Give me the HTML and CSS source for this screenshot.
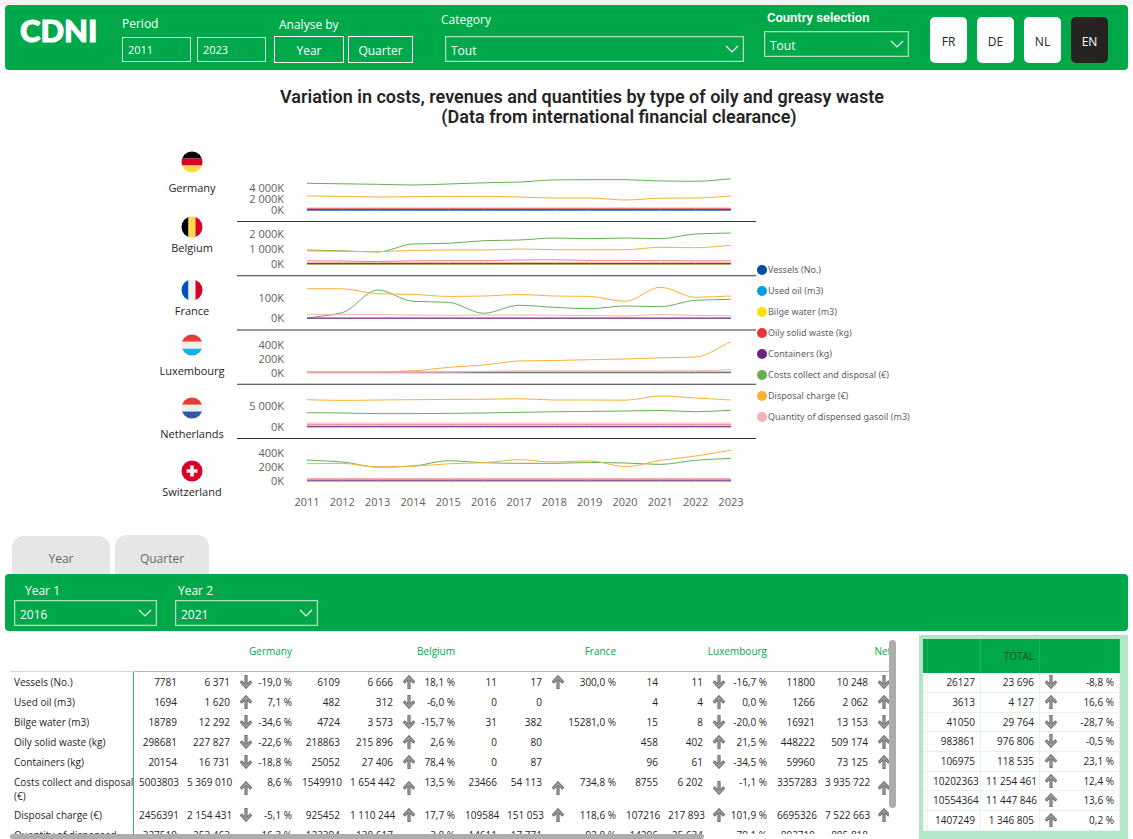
FILE: index.html
```html
<!DOCTYPE html>
<html lang="en">
<head>
    <meta charset="UTF-8">
    <meta name="viewport" content="width=device-width, initial-scale=1.0">
    <title>CDNI - Financial clearance</title>
    <link rel="stylesheet" href="styles.css">
</head>
<body>
    <svg class="defs" aria-hidden="true">
        <symbol id="arrow" viewBox="0 0 12 14">
            <path d="M6 12.5V3M1.8 6.6L6 2.2l4.2 4.4" fill="none" stroke="#6b6b6b" stroke-width="3.2" stroke-linecap="square"/>
            <path d="M6 12.5V3M1.8 6.6L6 2.2l4.2 4.4" fill="none" stroke="#9c9c9c" stroke-width="1.4" stroke-linecap="square"/>
        </symbol>
        <symbol id="chevron" viewBox="0 0 14 8">
            <path d="M1 1l6 6 6-6" fill="none" stroke="#fff" stroke-width="1.2"/>
        </symbol>
        <clipPath id="round"><circle cx="11" cy="11" r="10.5"/></clipPath>
    </svg>

    <header class="topbar">
        <div class="logo">CDNI</div>

        <div class="field period">
            <label for="from">Period</label>
            <div class="pair">
                <input type="text" id="from" value="2011">
                <input type="text" id="to" value="2023" aria-label="Period end">
            </div>
        </div>

        <div class="field analyse">
            <span class="caption">Analyse by</span>
            <div class="pair">
                <button type="button" class="outline wide">Year</button>
                <button type="button" class="outline">Quarter</button>
            </div>
        </div>

        <div class="field category">
            <label for="category">Category</label>
            <div class="select">
                <select id="category"><option>Tout</option></select>
                <svg><use href="#chevron"/></svg>
            </div>
        </div>

        <div class="field country-select">
            <label for="country">Country selection</label>
            <div class="select">
                <select id="country"><option>Tout</option></select>
                <svg><use href="#chevron"/></svg>
            </div>
        </div>

        <div class="langs">
            <button type="button">FR</button>
            <button type="button">DE</button>
            <button type="button">NL</button>
            <button type="button" class="active">EN</button>
        </div>
    </header>

    <main>
        <h1>Variation in costs, revenues and quantities by type of oily and greasy waste
            <span>(Data from international financial clearance)</span></h1>

        <section class="overview">
            <ul class="countries">
                <li class="loose">
                    <svg viewBox="0 0 22 22"><g clip-path="url(#round)"><path fill="#000" d="M0 0h22v7.5H0z"/><path fill="#d80027" d="M0 7.5h22v7H0z"/><path fill="#ffda44" d="M0 14.5h22V22H0z"/></g></svg>
                    Germany
                </li>
                <li>
                    <svg viewBox="0 0 22 22"><g clip-path="url(#round)"><path fill="#000" d="M0 0h7.5v22H0z"/><path fill="#ffda44" d="M7.5 0h7v22h-7z"/><path fill="#d80027" d="M14.5 0H22v22h-7.5z"/></g></svg>
                    Belgium
                </li>
                <li>
                    <svg viewBox="0 0 22 22"><g clip-path="url(#round)"><path fill="#0052b4" d="M0 0h7.5v22H0z"/><path fill="#f0f0f0" d="M7.5 0h7v22h-7z"/><path fill="#d80027" d="M14.5 0H22v22h-7.5z"/></g></svg>
                    France
                </li>
                <li class="loose">
                    <svg viewBox="0 0 22 22"><g clip-path="url(#round)"><path fill="#e73b36" d="M0 0h22v7.8H0z"/><path fill="#efefef" d="M0 7.8h22v7H0z"/><path fill="#18aee5" d="M0 14.8h22V22H0z"/></g></svg>
                    Luxembourg
                </li>
                <li class="loose">
                    <svg viewBox="0 0 22 22"><g clip-path="url(#round)"><path fill="#e73b36" d="M0 0h22v7.8H0z"/><path fill="#efefef" d="M0 7.8h22v6.6H0z"/><path fill="#3555a5" d="M0 14.4h22V22H0z"/></g></svg>
                    Netherlands
                </li>
                <li>
                    <svg viewBox="0 0 22 22"><circle cx="11" cy="11" r="10.5" fill="#d80027"/><path fill="#f0f0f0" d="M9.2 5.5h3.6v3.7h3.7v3.6h-3.7v3.7H9.2v-3.7H5.5V9.2h3.7z"/></svg>
                    Switzerland
                </li>
            </ul>

            <svg class="chart" id="chart" viewBox="237 140 520 375" role="img" aria-label="Costs, revenues and quantities per country, 2011 to 2023"></svg>

            <ul class="legend">
                <li class="vessels">Vessels (No.)</li>
                <li class="oil">Used oil (m3)</li>
                <li class="bilge">Bilge water (m3)</li>
                <li class="solid">Oily solid waste (kg)</li>
                <li class="containers">Containers (kg)</li>
                <li class="costs">Costs collect and disposal (€)</li>
                <li class="charge">Disposal charge (€)</li>
                <li class="gasoil">Quantity of dispensed gasoil (m3)</li>
            </ul>
        </section>

        <nav class="tabs">
            <button type="button">Year</button>
            <button type="button" class="tall">Quarter</button>
        </nav>

        <section class="yearbar">
            <div class="field">
                <label for="year1">Year 1</label>
                <div class="select">
                    <select id="year1"><option>2016</option></select>
                    <svg><use href="#chevron"/></svg>
                </div>
            </div>
            <div class="field year2">
                <label for="year2">Year 2</label>
                <div class="select">
                    <select id="year2"><option>2021</option></select>
                    <svg><use href="#chevron"/></svg>
                </div>
            </div>
        </section>

        <section class="results">
            <div class="matrix">
                <div class="matrix-view">
                    <table>
                        <colgroup>
                            <col class="c-label">
                            <col class="c-num"><col class="c-numw"><col class="c-pct">
                            <col class="c-num"><col class="c-numw"><col class="c-pct">
                            <col class="c-nums"><col class="c-numm"><col class="c-pctw">
                            <col class="c-nums"><col class="c-numm"><col class="c-pctm">
                            <col class="c-num"><col class="c-numw"><col class="c-pctm">
                        </colgroup>
                        <thead>
                            <tr>
                                <th></th>
                                <th colspan="3">Germany</th>
                                <th colspan="3">Belgium</th>
                                <th colspan="3">France</th>
                                <th colspan="3">Luxembourg</th>
                                <th colspan="3">Netherlands</th>
                            </tr>
                        </thead>
                        <tbody id="countryRows"></tbody>
                    </table>
                </div>
                <div class="track-y"><div class="thumb"></div></div>
                <div class="track-x"><div class="thumb"></div></div>
            </div>

            <div class="total">
                <table>
                    <colgroup><col class="t-edge"><col class="t-a"><col class="t-b"><col></colgroup>
                    <thead>
                        <tr><th></th><th></th><th>TOTAL</th><th></th></tr>
                    </thead>
                    <tbody id="totalRows"></tbody>
                </table>
            </div>
        </section>
    </main>

    <script src="script.js"></script>
</body>
</html>
```

FILE: styles.css
```css
* {
    box-sizing: border-box;
}
body {
    margin: 0;
    padding: 0 5px;
    border-top: 5px solid #f3f3f3;
    height: 100vh;
    overflow: hidden;
    display: flex;
    flex-direction: column;
    font-family: "Open Sans", "Noto Sans", sans-serif;
    font-size: 12px;
    color: #252423;
    background-color: #fff;
}
button, input, select {
    font: inherit;
    color: inherit;
    margin: 0;
}
ul {
    list-style: none;
    margin: 0;
    padding: 0;
}
.defs {
    position: absolute;
    width: 0;
    height: 0;
}

/* top bar */
.topbar {
    display: flex;
    align-items: flex-start;
    height: 65px;
    flex-shrink: 0;
    padding-right: 20px;
    border-radius: 4px;
    background-color: #00a84a;
    color: #fff;
}
.logo {
    width: 117px;
    padding: 8px 0 0 15px;
    font-family: Lato, sans-serif;
    font-weight: 900;
    font-size: 31px;
    line-height: 34px;
    -webkit-text-stroke: 1px #fff;
}
.field label, .caption {
    display: block;
    line-height: 16px;
}
.pair {
    display: flex;
}
.period {
    padding-top: 11px;
    margin-right: 8px;
}
.period .pair {
    gap: 6px;
    margin-top: 5px;
}
.period input {
    width: 69px;
    height: 25px;
    padding: 0 5px;
    border: 1px solid #c4ecd3;
    background: transparent;
    font-size: 11px;
}
.analyse {
    padding-top: 12px;
    margin-right: 28px;
}
.caption {
    padding-left: 5px;
}
.analyse .pair {
    gap: 4px;
    margin-top: 3px;
}
.outline {
    width: 65px;
    height: 27px;
    padding: 2px 0 0;
    border: 1px solid #fff;
    background: transparent;
}
.outline.wide {
    width: 70px;
}
.category {
    flex: 1;
    padding-top: 7px;
    margin-right: 20px;
}
.category .select {
    margin: 8px 0 0 4px;
}
.country-select {
    width: 145px;
    padding-top: 5px;
    margin-right: 21px;
}
.country-select label {
    padding-left: 3px;
    font-family: Roboto, sans-serif;
    font-weight: 600;
    font-size: 13px;
}
.country-select .select {
    margin-top: 5px;
}
.select {
    position: relative;
}
.select select {
    appearance: none;
    display: block;
    width: 100%;
    height: 26px;
    padding: 2px 5px 0;
    border: 1px solid #a8dfbc;
    border-radius: 0;
    box-shadow: inset 0 0 0 1px rgba(160, 205, 175, 0.35);
    background: transparent;
}
.select svg {
    position: absolute;
    right: 5px;
    top: 9px;
    width: 14px;
    height: 8px;
    pointer-events: none;
}
.langs {
    display: flex;
    gap: 10px;
    padding-top: 12px;
}
.langs button {
    width: 37px;
    height: 46px;
    padding: 2px 0 0;
    border: 0;
    border-radius: 5px;
    background-color: #fff;
    color: #252423;
    font-size: 12px;
}
.langs button.active {
    background-color: #252423;
    color: #fff;
}

/* chart */
main {
    flex: 1;
    min-height: 0;
    display: flex;
    flex-direction: column;
}
h1 {
    margin: 17px 0 13px;
    padding-left: 31px;
    text-align: center;
    font-family: Roboto, sans-serif;
    font-weight: 600;
    font-size: 18px;
    line-height: 20px;
}
h1 span {
    display: block;
    padding-left: 74px;
}
.overview {
    display: flex;
    padding-left: 152px;
}
.countries {
    display: grid;
    grid-template-rows: 65px 63px 55px 63px 63px 40px;
    width: 70px;
    margin-right: 10px;
    padding-top: 11px;
}
.countries li {
    display: flex;
    flex-direction: column;
    align-items: center;
    gap: 2px;
    line-height: 16px;
    font-size: 11px;
}
.countries .loose {
    gap: 7px;
}
.countries svg {
    width: 22px;
    height: 22px;
}
.chart {
    flex: 0 1 520px;
    min-width: 0;
    height: 375px;
    font-size: 11px;
}
.chart text {
    fill: #605e5c;
    text-anchor: end;
}
.chart .year {
    text-anchor: middle;
}
.chart .divider {
    stroke: #333;
}
.chart path {
    fill: none;
    stroke-width: 1;
}
.chart .vessels, .chart .bilge, .chart .solid {
    stroke-opacity: 0.6;
}
.legend {
    padding-top: 119px;
    font-family: "Noto Sans", sans-serif;
    font-size: 9px;
    line-height: 21px;
    color: #605e5c;
}
.legend li {
    display: flex;
    align-items: center;
    gap: 1px;
    height: 21px;
    white-space: nowrap;
}
.legend li::before {
    content: "";
    width: 10px;
    height: 10px;
    border-radius: 50%;
    background-color: currentColor;
}
.legend .vessels::before { background-color: #0050a0; }
.legend .oil::before { background-color: #009fe3; }
.legend .bilge::before { background-color: #ffde00; }
.legend .solid::before { background-color: #e73440; }
.legend .containers::before { background-color: #662483; }
.legend .costs::before { background-color: #65b054; }
.legend .charge::before { background-color: #f9b233; }
.legend .gasoil::before { background-color: #f7afb6; }

/* year selection */
.tabs {
    display: flex;
    align-items: flex-end;
    gap: 5px;
    margin-top: 20px;
    padding-left: 7px;
}
.tabs button {
    width: 98px;
    height: 38px;
    padding: 7px 0 0;
    border: 0;
    border-radius: 12px 12px 0 0;
    background-color: #e6e6e6;
    color: #666;
}
.tabs .tall {
    width: 94px;
    height: 39px;
}
.yearbar {
    display: flex;
    gap: 18px;
    height: 57px;
    flex-shrink: 0;
    padding: 9px 9px 0;
    border-radius: 4px;
    background-color: #00a84a;
    color: #fff;
}
.yearbar .field {
    width: 143px;
}
.yearbar label {
    padding-left: 11px;
}
.yearbar .year2 label {
    padding-left: 3px;
}
.yearbar .select {
    margin-top: 1px;
}

/* tables */
.results {
    flex: 1;
    min-height: 0;
    display: flex;
    justify-content: space-between;
    gap: 23px;
    padding: 4px 0 0 5px;
    font-size: 10px;
}
table {
    border-collapse: separate;
    border-spacing: 0;
    table-layout: fixed;
}
th, td {
    font-weight: 400;
    text-align: right;
    padding: 0 5px;
    white-space: nowrap;
}
.matrix {
    flex: 1;
    min-width: 0;
    display: grid;
    grid-template-columns: minmax(0, 1fr) 7px;
    grid-template-rows: minmax(0, 1fr) 5px;
    padding-top: 5px;
}
.matrix-view {
    overflow: hidden;
}
.matrix table {
    width: 927px;
}
.matrix thead th {
    height: 32px;
    padding-bottom: 10px;
    border-bottom: 1px solid #86d6a4;
    color: #00a84a;
}
.matrix thead th:first-child {
    border-bottom-color: #b9e8cb;
}
.matrix td {
    height: 20px;
    line-height: 20px;
    vertical-align: top;
}
.matrix tbody th {
    height: 20px;
    padding: 3px 0 2px 4px;
    line-height: 14px;
    text-align: left;
    vertical-align: top;
    border-right: 1px solid #35b566;
}
.c-label { width: 124px; }
.c-num { width: 48px; }
.c-numw { width: 53px; }
.c-nums { width: 42px; }
.c-numm { width: 45px; }
.c-pct { width: 62px; }
.c-pctm { width: 64px; }
.c-pctw { width: 74px; }
.pct {
    display: flex;
    justify-content: space-between;
    align-items: flex-start;
}
.pct svg {
    width: 12px;
    height: 14px;
    margin-top: 3px;
}
.pct .down {
    transform: rotate(180deg);
}
.pct span {
    margin-left: auto;
}
.double .pct svg {
    margin-top: 9px;
}
.thumb {
    border-radius: 4px;
    background-color: #adadad;
}
.track-y .thumb {
    height: 168px;
}
.track-x .thumb {
    width: 79%;
    height: 5px;
}
.total {
    width: 209px;
    padding: 4px 8px 10px 4px;
    background-color: #b3e5c7;
}
.total table {
    width: 100%;
    background-color: #fff;
}
.total thead th {
    height: 34px;
    border-right: 1px solid #1db45f;
    background-color: #00a84a;
    color: #14502d;
}
.total td {
    height: 20px;
    line-height: 19px;
    border-right: 1px solid #e6f5ec;
    border-bottom: 1px solid #e6f5ec;
}
.total tr:nth-child(3n) td {
    height: 19px;
    line-height: 18px;
}
.total .pct svg {
    margin-top: 2px;
}
.t-edge { width: 5px; }
.t-a { width: 53px; }
.t-b { width: 59px; }
.total th:first-child, .total td:first-child {
    padding: 0;
}
```

FILE: script.js
```javascript
const colors = {
    vessels: '#0050a0', bilge: '#ffde00', solid: '#e73440', containers: '#662483',
    costs: '#65b054', charge: '#f9b233', gasoil: '#f7afb6'
};

const flat = y => Array(13).fill(y);

// one panel per country, line positions from 2011 to 2023
const panels = [
    {
        ticks: [['4 000K', 188], ['2 000K', 199], ['0K', 210]],
        lines: {
            vessels: flat(210.5),
            gasoil: flat(207.9),
            solid: flat(208.5),
            containers: flat(209.6),
            costs: [183.3, 183.8, 184.3, 185, 184, 182.8, 182, 179.9, 179.7, 179.7, 181, 181.3, 178.8],
            charge: [196, 196.3, 197, 196.7, 196.3, 196.3, 197, 198, 198, 200, 198.2, 198, 196]
        }
    },
    {
        ticks: [['2 000K', 234], ['1 000K', 249], ['0K', 264]],
        lines: {
            vessels: flat(264.4),
            bilge: flat(264.4),
            containers: flat(263.6),
            costs: [250, 250.8, 252, 244, 243.3, 240.7, 240, 238, 238.7, 238, 238.7, 234, 233],
            charge: [251, 251.3, 251.7, 250.3, 250, 250, 249, 249.7, 249.7, 249.7, 247.3, 247.7, 245.3],
            gasoil: flat(262.4),
            solid: [260.8, 261, 261.6, 260.8, 260.7, 260.7, 259.9, 259.8, 260.4, 260.4, 260.7, 260.8, 260.8]
        }
    },
    {
        ticks: [['100K', 298], ['0K', 318]],
        lines: {
            solid: flat(318),
            costs: [318, 312.7, 290, 301.3, 302.3, 313.3, 305.3, 307.3, 308.7, 306, 306.7, 300.3, 299.3],
            charge: [288.7, 288.8, 293.7, 294.4, 296.4, 296, 294.5, 296, 296.4, 301.3, 287.3, 297.3, 296],
            gasoil: [314.3, 314.3, 314.6, 315, 315.3, 315, 315, 315.2, 315.5, 316, 314.5, 315.4, 315.8],
            containers: flat(318.2)
        }
    },
    {
        ticks: [['400K', 345], ['200K', 359], ['0K', 373]],
        lines: {
            containers: flat(372.7),
            costs: flat(372),
            charge: [371.7, 371.7, 371.7, 370.8, 367.4, 365, 361, 360.5, 359.7, 359, 357.8, 357, 341.7],
            gasoil: [372.4, 372.4, 372.4, 372.3, 372.2, 371.4, 370.9, 370.9, 370.9, 370.9, 370.9, 370.8, 369.6]
        }
    },
    {
        ticks: [['5 000K', 406], ['0K', 427]],
        lines: {
            vessels: flat(427),
            containers: flat(426.3),
            costs: [412.7, 413, 413.6, 413.6, 413.4, 413, 412.3, 411.8, 411.4, 411, 410.5, 411.7, 410.3],
            charge: [399.7, 400.4, 400, 399.7, 399.4, 399.3, 398.7, 400, 400, 400.2, 396, 398, 400],
            gasoil: flat(423.2),
            solid: flat(424.6)
        }
    },
    {
        ticks: [['400K', 453], ['200K', 467], ['0K', 481]],
        lines: {
            bilge: flat(481.2),
            containers: flat(480.8),
            costs: [460, 462, 467.2, 466, 460.7, 462.7, 463.3, 463.3, 462.5, 463, 464.4, 460.3, 458.3],
            charge: [463.7, 463.4, 467, 466.2, 463.8, 462.7, 459.7, 462, 460.8, 466.7, 460.4, 456, 450.3],
            gasoil: flat(478.4),
            solid: flat(479.4)
        }
    }
];

const startX = 307;
const stepX = 35.33;

// smooth line that does not overshoot its points
function curve(ys) {
    const d = ys.slice(1).map((y, i) => (y - ys[i]) / stepX);
    const m = ys.map((y, i) => {
        if (i === 0) return d[0];
        if (i === ys.length - 1) return d[i - 1];
        if (d[i - 1] * d[i] <= 0) return 0;
        return 2 * d[i - 1] * d[i] / (d[i - 1] + d[i]);
    });
    let path = `M${startX} ${ys[0]}`;
    for (let i = 1; i < ys.length; i++) {
        const x0 = startX + (i - 1) * stepX;
        const x1 = x0 + stepX;
        const h = stepX / 3;
        path += `C${x0 + h} ${ys[i - 1] + m[i - 1] * h} ${x1 - h} ${ys[i] - m[i] * h} ${x1} ${ys[i]}`;
    }
    return path;
}

let chart = '';
panels.forEach((panel, i) => {
    panel.ticks.forEach(([text, y]) => {
        chart += `<text x="284" y="${y + 4}">${text}</text>`;
    });
    for (const name in panel.lines) {
        chart += `<path class="${name}" d="${curve(panel.lines[name])}" stroke="${colors[name]}"/>`;
    }
    if (i > 0) {
        const y = 221.5 + (i - 1) * 54.25;
        chart += `<line class="divider" x1="237" x2="756" y1="${y}" y2="${y}"/>`;
    }
});
for (let i = 0; i < 13; i++) {
    chart += `<text class="year" x="${startX + i * stepX}" y="506">${2011 + i}</text>`;
}
document.getElementById('chart').innerHTML = chart;

// label, then year 1 | year 2 | u(p), d(own) or - | variation for each country
const countryRows = [
    ['Vessels (No.)', '7781|6 371|d|-19,0 %', '6109|6 666|u|18,1 %', '11|17|u|300,0 %', '14|11|d|-16,7 %', '11800|10 248|d|'],
    ['Used oil (m3)', '1694|1 620|u|7,1 %', '482|312|d|-6,0 %', '0|0|-|', '4|4|u|0,0 %', '1266|2 062|u|'],
    ['Bilge water (m3)', '18789|12 292|d|-34,6 %', '4724|3 573|d|-15,7 %', '31|382|-|15281,0 %', '15|8|d|-20,0 %', '16921|13 153|d|'],
    ['Oily solid waste (kg)', '298681|227 827|d|-22,6 %', '218863|215 896|u|2,6 %', '0|80|-|', '458|402|u|21,5 %', '448222|509 174|u|'],
    ['Containers (kg)', '20154|16 731|d|-18,8 %', '25052|27 406|u|78,4 %', '0|87|-|', '96|61|d|-34,5 %', '59960|73 125|u|'],
    ['Costs collect and disposal<br>(€)', '5003803|5 369 010|u|8,6 %', '1549910|1 654 442|u|13,5 %', '23466|54 113|u|734,8 %', '8755|6 202|d|-1,1 %', '3357283|3 935 722|u|'],
    ['Disposal charge (€)', '2456391|2 154 431|d|-5,1 %', '925452|1 110 244|u|17,7 %', '109584|151 053|u|118,6 %', '107216|217 893|u|101,9 %', '6695326|7 522 663|u|'],
    ['Quantity of dispensed<br>gasoil (m3)', '327519|253 463|d|-16,3 %', '123394|138 617|u|3,8 %', '14611|17 771|u|92,8 %', '14296|25 634|u|79,1 %', '892719|885 818|d|']
];

const totalRows = [
    '26127|23 696|d|-8,8 %',
    '3613|4 127|u|16,6 %',
    '41050|29 764|d|-28,7 %',
    '983861|976 806|d|-0,5 %',
    '106975|118 535|u|23,1 %',
    '10202363|11 254 461|u|12,4 %',
    '10554364|11 447 846|u|13,6 %',
    '1407249|1 346 805|u|0,2 %'
];

function cells(entry) {
    const [first, second, dir, pct] = entry.split('|');
    const icon = dir === '-' ? '' : `<svg class="${dir === 'u' ? 'up' : 'down'}"><use href="#arrow"/></svg>`;
    return `<td>${first}</td><td>${second}</td><td><div class="pct">${icon}<span>${pct}</span></div></td>`;
}

document.getElementById('countryRows').innerHTML = countryRows.map(([label, ...data]) => `
    <tr class="${label.includes('<br>') ? 'double' : ''}">
        <th scope="row">${label}</th>${data.map(cells).join('')}
    </tr>`).join('');

document.getElementById('totalRows').innerHTML = totalRows.map(row => `<tr><td></td>${cells(row)}</tr>`).join('');
```
